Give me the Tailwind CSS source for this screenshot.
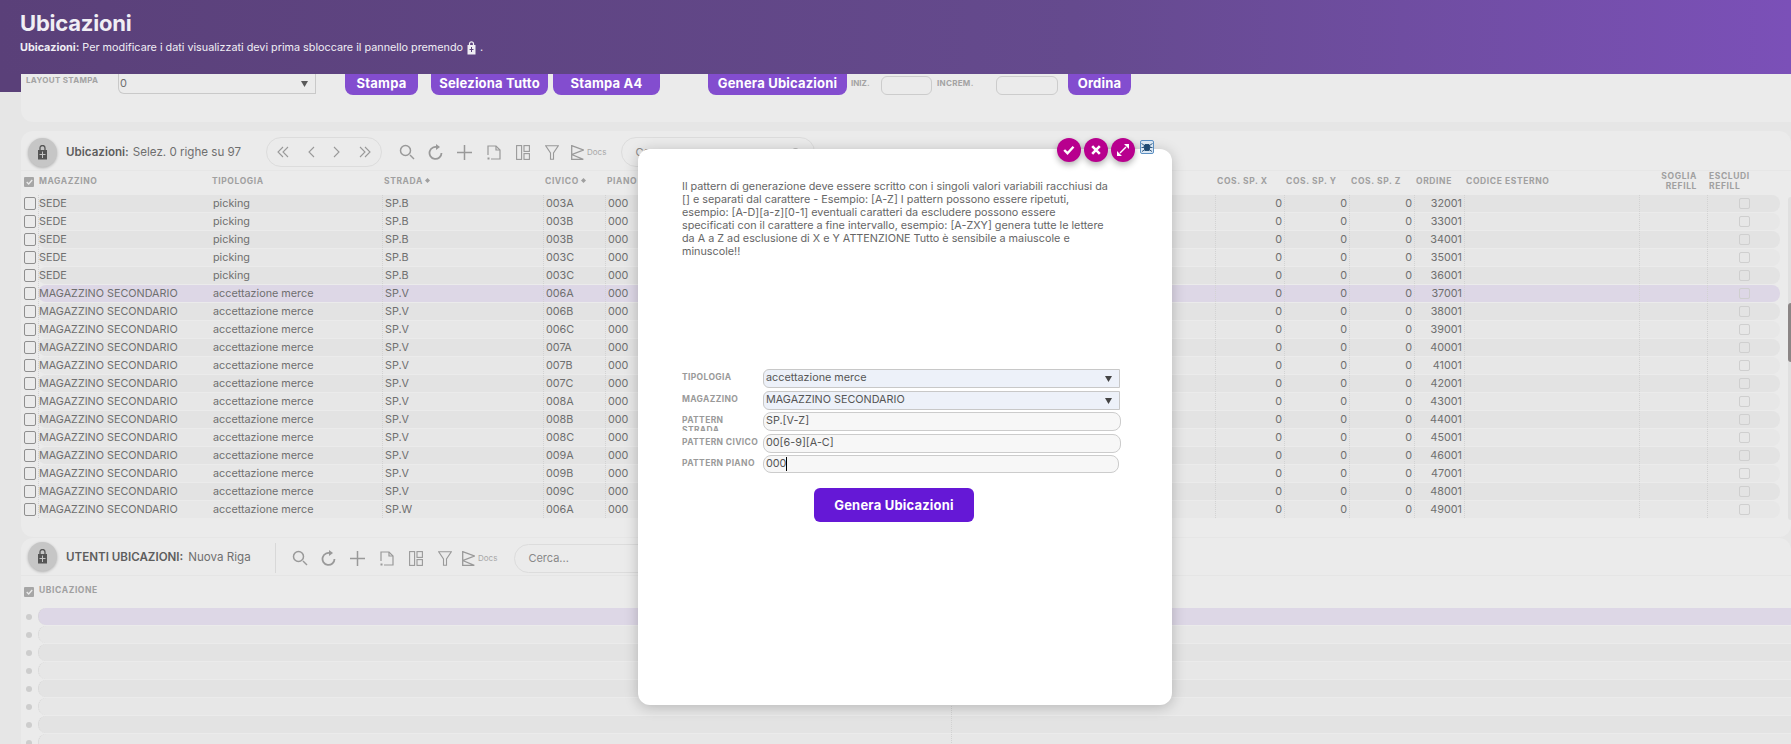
<!DOCTYPE html>
<html lang="it">
<head>
<meta charset="utf-8">
<script src="https://cdn.jsdelivr.net/npm/@tailwindcss/browser@4"></script>
</head>
<body class="relative w-[1791px] h-[744px] overflow-hidden bg-[#e6e6e6] font-['Inter',sans-serif] text-[#6f6f6f]">

<!-- Purple band -->
<div class="absolute inset-x-0 top-0 h-[92px] bg-[#5a4079]"></div>
<header class="absolute inset-x-0 top-0 z-10 h-[74px] bg-gradient-to-r from-[#5a4079] via-[#654a8e] via-60% to-[#7b50b8] pl-[20px] pt-[9px] text-[#f0eef4]">
  <h1 class="text-[22px] leading-[28px] font-bold tracking-[-0.2px]">Ubicazioni</h1>
  <p class="flex items-center mt-[4px] text-[10.8px] leading-[14px]"><b class="font-bold mr-[3px]">Ubicazioni:</b> Per modificare i dati visualizzati devi prima sbloccare il pannello premendo
    <svg class="mx-[4px]" width="9" height="14" viewBox="0 0 9 14"><path d="M2.5 4V2.8a2 2 0 0 1 4 0V4" fill="none" stroke="#f0eef4" stroke-width="1.2"/><rect x="0.5" y="4" width="8" height="9.5" fill="#f0eef4"/><path d="M4.5 6v5M2.5 8.5h4" stroke="#5a4079" stroke-width="1"/></svg> .</p>
</header>

<main class="relative pt-[74px]">
  <!-- Print panel -->
  <section class="ml-[21px] h-[48px] rounded-bl-xl bg-[#ebebeb] flex items-start pl-[5px] text-[#fff]">
    <span class="mt-[1px] w-[92px] text-[8px] leading-[10px] font-bold tracking-[0.3px] text-[#a3a3a3]">LAYOUT STAMPA</span>
    <div class="flex justify-between items-center w-[198px] h-[20px] border-x border-b border-[#c9c9c9] rounded-bl-md pl-px pr-[7px] text-[11px] text-[#6f6f6f]"><span>0</span><svg width="7" height="6"><path d="M0 0h7L3.500 6z" fill="#5a5a5a"/></svg></div>
    <div class="ml-[29px] w-[73px] h-[21px] rounded-b-lg bg-[#834dcf] text-center text-[13px] leading-[18px] font-bold tracking-[0.2px]">Stampa</div>
    <div class="ml-[13px] w-[117px] h-[21px] rounded-b-lg bg-[#834dcf] text-center text-[13px] leading-[18px] font-bold tracking-[0.2px]">Seleziona Tutto</div>
    <div class="ml-[5px] w-[107px] h-[21px] rounded-b-lg bg-[#834dcf] text-center text-[13px] leading-[18px] font-bold tracking-[0.2px]">Stampa A4</div>
    <div class="ml-[48px] w-[139px] h-[21px] rounded-b-lg bg-[#834dcf] text-center text-[13px] leading-[18px] font-bold tracking-[0.2px]">Genera Ubicazioni</div>
    <span class="ml-[4px] w-[30px] mt-[4px] text-[8px] leading-[10px] font-bold text-[#a3a3a3]">INIZ.</span>
    <div class="mt-[2px] w-[51px] h-[19px] rounded-md border border-[#cccccc]"></div>
    <span class="ml-[5px] w-[59px] mt-[4px] text-[8px] leading-[10px] font-bold tracking-[0.3px] text-[#a3a3a3]">INCREM.</span>
    <div class="mt-[2px] w-[62px] h-[19px] rounded-md border border-[#cccccc]"></div>
    <div class="ml-[10px] w-[63px] h-[21px] rounded-b-lg bg-[#834dcf] text-center text-[13px] leading-[18px] font-bold tracking-[0.2px]">Ordina</div>
  </section>

  <!-- Toolbar 1 -->
  <section class="ml-[21px] mt-[9px] h-[39px] rounded-t-xl bg-[#ebebeb] flex items-center pl-[7px] pt-[3px]">
    <div class="w-[29px] h-[29px] rounded-full bg-[#c6c6c6] shadow-[0_1px_3px_rgba(0,0,0,.25)] flex items-center justify-center">
      <svg width="11" height="15" viewBox="0 0 11 15"><path d="M3 5V3a2.500 2.500 0 0 1 5 0v2" fill="none" stroke="#555" stroke-width="1.300"/><rect x="1" y="5" width="9" height="9.500" fill="#555"/><path d="M5.500 6.500v6.500M2.500 9.500h6" stroke="#c6c6c6" stroke-width="1"/></svg>
    </div>
    <div class="ml-[9px] w-[176px] flex text-[11.6px] leading-[18px] whitespace-nowrap"><b class="font-semibold text-[#5d5d5d] mr-[4px]">Ubicazioni:</b> <span>Selez. 0 righe su 97</span></div>
    <div class="ml-[24px] w-[116px] h-[30px] rounded-full border border-[#dcdcdc] flex items-center justify-around px-[1px] text-[#999999]">
      <svg width="12" height="12" viewBox="0 0 12 12" fill="none" stroke="#999" stroke-width="1.100"><path d="M6 1 1 6l5 5M11 1 6 6l5 5"/></svg>
      <svg width="7" height="12" viewBox="0 0 7 12" fill="none" stroke="#999" stroke-width="1.100"><path d="M6 1 1 6l5 5"/></svg>
      <svg width="7" height="12" viewBox="0 0 7 12" fill="none" stroke="#999" stroke-width="1.100"><path d="m1 1 5 5-5 5"/></svg>
      <svg width="12" height="12" viewBox="0 0 12 12" fill="none" stroke="#999" stroke-width="1.100"><path d="m1 1 5 5-5 5M6 1l5 5-5 5"/></svg>
    </div>
    <div class="ml-[10px] flex items-center">
      <span class="w-[29px] flex justify-center"><svg width="16" height="16" viewBox="0 0 16 16" fill="none" stroke="#999" stroke-width="1.500"><circle cx="6.500" cy="6.500" r="5"/><path d="m11 11 4 4"/></svg></span>
      <span class="w-[29px] flex justify-center"><svg width="16" height="16" viewBox="0 0 16 16" fill="none" stroke="#999" stroke-width="1.800"><path d="M10 3.500a6 6 0 1 0 3.500 5.500"/><path d="M8 0v6l4-3z" fill="#999" stroke="none"/></svg></span>
      <span class="w-[29px] flex justify-center"><svg width="15" height="15" viewBox="0 0 15 15" stroke="#999" stroke-width="1.500"><path d="M7.500 0v15M0 7.500h15"/></svg></span>
      <span class="w-[29px] flex justify-center"><svg width="14" height="15" viewBox="0 0 14 15" fill="none" stroke="#999" stroke-width="1.200"><path d="M1 10V1h8l4 4v9H4"/><path d="M9 1v4h4"/><path d="M0.500 12.500h2v2h-2z" fill="#999" stroke="none"/></svg></span>
      <span class="w-[29px] flex justify-center"><svg width="14" height="15" viewBox="0 0 14 15" fill="none" stroke="#999" stroke-width="1.100"><rect x="0.600" y="0.600" width="5" height="13.800"/><rect x="8" y="0.600" width="5.400" height="5.800"/><rect x="8" y="8.600" width="5.400" height="5.800"/></svg></span>
      <span class="w-[29px] flex justify-center"><svg width="14" height="15" viewBox="0 0 14 15" fill="none" stroke="#999" stroke-width="1.100"><path d="M.7 .7h12.600L8.500 8v6.300h-3V8z"/></svg></span>
      <span class="w-[14px] ml-[5px] flex"><svg width="13" height="15" viewBox="0 0 13 15" fill="none" stroke="#999" stroke-width="1.300"><path d="M.7 .7 12.300 5 .7 9.500zM.7 9.500 12.300 14.300H.7z"/></svg></span>
      <span class="ml-[2px] text-[8px] text-[#a8a8a8]">Docs</span>
    </div>
    <div class="ml-[15px] w-[194px] h-[30px] rounded-full border border-[#dcdcdc] flex items-center justify-between pl-[13px] pr-[14px] text-[11px] text-[#888]"><span>Cerca...</span><span class="w-[9px] h-[9px] rounded-full border border-[#aaa]"></span></div>
  </section>

  <!-- Table 1 -->
  <section class="relative ml-[21px] mt-px h-[366px] rounded-b-xl bg-[#ebebeb]">
    <div class="h-[24px] flex items-center pb-[5px]">
      <span class="ml-[3px] w-[10px] h-[10px] bg-[#a6a6a6] rounded-[1px] mr-[4px] mt-[3px] flex items-center justify-center"><svg width="7" height="6" viewBox="0 0 7 6" fill="none" stroke="#ebebeb" stroke-width="1.300"><path d="m.7 3 2 2 3.500-4"/></svg></span>
      <div class="grid grid-cols-[172px_172px_161px_62px_610px_69px_65px_65px_50px_175px_68px_73px] text-[8.5px] leading-[10px] font-bold tracking-[0.6px] text-[#a0a0a0] items-center *:pl-[2px]">
        <span class="-ml-[1px]">MAGAZZINO</span><span>TIPOLOGIA</span><span class="flex items-center gap-[2px]">STRADA<svg width="5" height="5"><path d="M2.500 0 5 2.500 2.500 5 0 2.500z" fill="#a0a0a0"/></svg></span><span class="flex items-center gap-[2px]">CIVICO<svg width="5" height="5"><path d="M2.500 0 5 2.500 2.500 5 0 2.500z" fill="#a0a0a0"/></svg></span><span>PIANO</span><span>COS. SP. X</span><span>COS. SP. Y</span><span>COS. SP. Z</span><span>ORDINE</span><span>CODICE ESTERNO</span><span class="text-right pr-[10px] pl-0!">SOGLIA REFILL</span><span>ESCLUDI REFILL</span>
      </div>
    </div>

    <div class="flex flex-col gap-px pl-[17px] text-[10.8px] leading-[17px] [&>div]:h-[17px] [&>div]:grid [&>div]:grid-cols-[172px_172px_161px_62px_610px_69px_65px_65px_50px_175px_68px_73px] [&>div]:w-[1742px] [&>div]:rounded-lg [&>div]:relative [&>div>*]:px-[2px] [&>div>*]:border-l [&>div>*]:border-dotted [&>div>*]:border-[#d2d2d2]">
      <div class="bg-[#e3e3e3]"><span class="pl-0!">SEDE</span><span class="border-l-transparent!">picking</span><span>SP.B</span><span>003A</span><span>000</span><span class="text-right">0</span><span class="text-right">0</span><span class="text-right">0</span><span class="text-right">32001</span><span></span><span></span><span class="flex! items-center justify-center"><i class="w-[11px] h-[11px] rounded-[2px] border border-[#cfcfcf]"></i></span><i class="absolute -left-[14px] top-[2px] !border !border-solid w-[12px] h-[13px] rounded-[2px] !border-[#8f8f8f] !p-0"></i></div>
      <div class="bg-[#e7e7e7]"><span class="pl-0!">SEDE</span><span class="border-l-transparent!">picking</span><span>SP.B</span><span>003B</span><span>000</span><span class="text-right">0</span><span class="text-right">0</span><span class="text-right">0</span><span class="text-right">33001</span><span></span><span></span><span class="flex! items-center justify-center"><i class="w-[11px] h-[11px] rounded-[2px] border border-[#cfcfcf]"></i></span><i class="absolute -left-[14px] top-[2px] !border !border-solid w-[12px] h-[13px] rounded-[2px] !border-[#8f8f8f] !p-0"></i></div>
      <div class="bg-[#e3e3e3]"><span class="pl-0!">SEDE</span><span class="border-l-transparent!">picking</span><span>SP.B</span><span>003B</span><span>000</span><span class="text-right">0</span><span class="text-right">0</span><span class="text-right">0</span><span class="text-right">34001</span><span></span><span></span><span class="flex! items-center justify-center"><i class="w-[11px] h-[11px] rounded-[2px] border border-[#cfcfcf]"></i></span><i class="absolute -left-[14px] top-[2px] !border !border-solid w-[12px] h-[13px] rounded-[2px] !border-[#8f8f8f] !p-0"></i></div>
      <div class="bg-[#e7e7e7]"><span class="pl-0!">SEDE</span><span class="border-l-transparent!">picking</span><span>SP.B</span><span>003C</span><span>000</span><span class="text-right">0</span><span class="text-right">0</span><span class="text-right">0</span><span class="text-right">35001</span><span></span><span></span><span class="flex! items-center justify-center"><i class="w-[11px] h-[11px] rounded-[2px] border border-[#cfcfcf]"></i></span><i class="absolute -left-[14px] top-[2px] !border !border-solid w-[12px] h-[13px] rounded-[2px] !border-[#8f8f8f] !p-0"></i></div>
      <div class="bg-[#e3e3e3]"><span class="pl-0!">SEDE</span><span class="border-l-transparent!">picking</span><span>SP.B</span><span>003C</span><span>000</span><span class="text-right">0</span><span class="text-right">0</span><span class="text-right">0</span><span class="text-right">36001</span><span></span><span></span><span class="flex! items-center justify-center"><i class="w-[11px] h-[11px] rounded-[2px] border border-[#cfcfcf]"></i></span><i class="absolute -left-[14px] top-[2px] !border !border-solid w-[12px] h-[13px] rounded-[2px] !border-[#8f8f8f] !p-0"></i></div>
      <div class="bg-[#ddd7e6]"><span class="pl-0!">MAGAZZINO SECONDARIO</span><span class="border-l-transparent!">accettazione merce</span><span>SP.V</span><span>006A</span><span>000</span><span class="text-right">0</span><span class="text-right">0</span><span class="text-right">0</span><span class="text-right">37001</span><span></span><span></span><span class="flex! items-center justify-center"><i class="w-[11px] h-[11px] rounded-[2px] border border-[#cfcfcf]"></i></span><i class="absolute -left-[14px] top-[2px] !border !border-solid w-[12px] h-[13px] rounded-[2px] !border-[#8f8f8f] !p-0"></i></div>
      <div class="bg-[#e3e3e3]"><span class="pl-0!">MAGAZZINO SECONDARIO</span><span class="border-l-transparent!">accettazione merce</span><span>SP.V</span><span>006B</span><span>000</span><span class="text-right">0</span><span class="text-right">0</span><span class="text-right">0</span><span class="text-right">38001</span><span></span><span></span><span class="flex! items-center justify-center"><i class="w-[11px] h-[11px] rounded-[2px] border border-[#cfcfcf]"></i></span><i class="absolute -left-[14px] top-[2px] !border !border-solid w-[12px] h-[13px] rounded-[2px] !border-[#8f8f8f] !p-0"></i></div>
      <div class="bg-[#e7e7e7]"><span class="pl-0!">MAGAZZINO SECONDARIO</span><span class="border-l-transparent!">accettazione merce</span><span>SP.V</span><span>006C</span><span>000</span><span class="text-right">0</span><span class="text-right">0</span><span class="text-right">0</span><span class="text-right">39001</span><span></span><span></span><span class="flex! items-center justify-center"><i class="w-[11px] h-[11px] rounded-[2px] border border-[#cfcfcf]"></i></span><i class="absolute -left-[14px] top-[2px] !border !border-solid w-[12px] h-[13px] rounded-[2px] !border-[#8f8f8f] !p-0"></i></div>
      <div class="bg-[#e3e3e3]"><span class="pl-0!">MAGAZZINO SECONDARIO</span><span class="border-l-transparent!">accettazione merce</span><span>SP.V</span><span>007A</span><span>000</span><span class="text-right">0</span><span class="text-right">0</span><span class="text-right">0</span><span class="text-right">40001</span><span></span><span></span><span class="flex! items-center justify-center"><i class="w-[11px] h-[11px] rounded-[2px] border border-[#cfcfcf]"></i></span><i class="absolute -left-[14px] top-[2px] !border !border-solid w-[12px] h-[13px] rounded-[2px] !border-[#8f8f8f] !p-0"></i></div>
      <div class="bg-[#e7e7e7]"><span class="pl-0!">MAGAZZINO SECONDARIO</span><span class="border-l-transparent!">accettazione merce</span><span>SP.V</span><span>007B</span><span>000</span><span class="text-right">0</span><span class="text-right">0</span><span class="text-right">0</span><span class="text-right">41001</span><span></span><span></span><span class="flex! items-center justify-center"><i class="w-[11px] h-[11px] rounded-[2px] border border-[#cfcfcf]"></i></span><i class="absolute -left-[14px] top-[2px] !border !border-solid w-[12px] h-[13px] rounded-[2px] !border-[#8f8f8f] !p-0"></i></div>
      <div class="bg-[#e3e3e3]"><span class="pl-0!">MAGAZZINO SECONDARIO</span><span class="border-l-transparent!">accettazione merce</span><span>SP.V</span><span>007C</span><span>000</span><span class="text-right">0</span><span class="text-right">0</span><span class="text-right">0</span><span class="text-right">42001</span><span></span><span></span><span class="flex! items-center justify-center"><i class="w-[11px] h-[11px] rounded-[2px] border border-[#cfcfcf]"></i></span><i class="absolute -left-[14px] top-[2px] !border !border-solid w-[12px] h-[13px] rounded-[2px] !border-[#8f8f8f] !p-0"></i></div>
      <div class="bg-[#e7e7e7]"><span class="pl-0!">MAGAZZINO SECONDARIO</span><span class="border-l-transparent!">accettazione merce</span><span>SP.V</span><span>008A</span><span>000</span><span class="text-right">0</span><span class="text-right">0</span><span class="text-right">0</span><span class="text-right">43001</span><span></span><span></span><span class="flex! items-center justify-center"><i class="w-[11px] h-[11px] rounded-[2px] border border-[#cfcfcf]"></i></span><i class="absolute -left-[14px] top-[2px] !border !border-solid w-[12px] h-[13px] rounded-[2px] !border-[#8f8f8f] !p-0"></i></div>
      <div class="bg-[#e3e3e3]"><span class="pl-0!">MAGAZZINO SECONDARIO</span><span class="border-l-transparent!">accettazione merce</span><span>SP.V</span><span>008B</span><span>000</span><span class="text-right">0</span><span class="text-right">0</span><span class="text-right">0</span><span class="text-right">44001</span><span></span><span></span><span class="flex! items-center justify-center"><i class="w-[11px] h-[11px] rounded-[2px] border border-[#cfcfcf]"></i></span><i class="absolute -left-[14px] top-[2px] !border !border-solid w-[12px] h-[13px] rounded-[2px] !border-[#8f8f8f] !p-0"></i></div>
      <div class="bg-[#e7e7e7]"><span class="pl-0!">MAGAZZINO SECONDARIO</span><span class="border-l-transparent!">accettazione merce</span><span>SP.V</span><span>008C</span><span>000</span><span class="text-right">0</span><span class="text-right">0</span><span class="text-right">0</span><span class="text-right">45001</span><span></span><span></span><span class="flex! items-center justify-center"><i class="w-[11px] h-[11px] rounded-[2px] border border-[#cfcfcf]"></i></span><i class="absolute -left-[14px] top-[2px] !border !border-solid w-[12px] h-[13px] rounded-[2px] !border-[#8f8f8f] !p-0"></i></div>
      <div class="bg-[#e3e3e3]"><span class="pl-0!">MAGAZZINO SECONDARIO</span><span class="border-l-transparent!">accettazione merce</span><span>SP.V</span><span>009A</span><span>000</span><span class="text-right">0</span><span class="text-right">0</span><span class="text-right">0</span><span class="text-right">46001</span><span></span><span></span><span class="flex! items-center justify-center"><i class="w-[11px] h-[11px] rounded-[2px] border border-[#cfcfcf]"></i></span><i class="absolute -left-[14px] top-[2px] !border !border-solid w-[12px] h-[13px] rounded-[2px] !border-[#8f8f8f] !p-0"></i></div>
      <div class="bg-[#e7e7e7]"><span class="pl-0!">MAGAZZINO SECONDARIO</span><span class="border-l-transparent!">accettazione merce</span><span>SP.V</span><span>009B</span><span>000</span><span class="text-right">0</span><span class="text-right">0</span><span class="text-right">0</span><span class="text-right">47001</span><span></span><span></span><span class="flex! items-center justify-center"><i class="w-[11px] h-[11px] rounded-[2px] border border-[#cfcfcf]"></i></span><i class="absolute -left-[14px] top-[2px] !border !border-solid w-[12px] h-[13px] rounded-[2px] !border-[#8f8f8f] !p-0"></i></div>
      <div class="bg-[#e3e3e3]"><span class="pl-0!">MAGAZZINO SECONDARIO</span><span class="border-l-transparent!">accettazione merce</span><span>SP.V</span><span>009C</span><span>000</span><span class="text-right">0</span><span class="text-right">0</span><span class="text-right">0</span><span class="text-right">48001</span><span></span><span></span><span class="flex! items-center justify-center"><i class="w-[11px] h-[11px] rounded-[2px] border border-[#cfcfcf]"></i></span><i class="absolute -left-[14px] top-[2px] !border !border-solid w-[12px] h-[13px] rounded-[2px] !border-[#8f8f8f] !p-0"></i></div>
      <div class="bg-[#e7e7e7]"><span class="pl-0!">MAGAZZINO SECONDARIO</span><span class="border-l-transparent!">accettazione merce</span><span>SP.W</span><span>006A</span><span>000</span><span class="text-right">0</span><span class="text-right">0</span><span class="text-right">0</span><span class="text-right">49001</span><span></span><span></span><span class="flex! items-center justify-center"><i class="w-[11px] h-[11px] rounded-[2px] border border-[#cfcfcf]"></i></span><i class="absolute -left-[14px] top-[2px] !border !border-solid w-[12px] h-[13px] rounded-[2px] !border-[#8f8f8f] !p-0"></i></div>
    </div>
    <!-- scrollbar -->
    <div class="absolute right-0 top-[26px] w-[3px] h-[323px] rounded-l bg-[#e0e0e0]"><div class="mt-[106px] h-[59px] rounded-l bg-[#8b8585]"></div></div>
  </section>

  <!-- Toolbar 2 -->
  <section class="ml-[21px] mt-px h-[38px] rounded-t-xl bg-[#ebebeb] flex items-center pl-[7px] border-b border-[#e5e5e5]">
    <div class="w-[29px] h-[29px] rounded-full bg-[#c6c6c6] shadow-[0_1px_3px_rgba(0,0,0,.25)] flex items-center justify-center">
      <svg width="11" height="15" viewBox="0 0 11 15"><path d="M3 5V3a2.500 2.500 0 0 1 5 0v2" fill="none" stroke="#555" stroke-width="1.300"/><rect x="1" y="5" width="9" height="9.500" fill="#555"/><path d="M5.500 6.500v6.500M2.500 9.500h6" stroke="#c6c6c6" stroke-width="1"/></svg>
    </div>
    <div class="ml-[9px] mt-px w-[209px] flex text-[11.6px] leading-[18px] whitespace-nowrap"><b class="font-semibold text-[#5d5d5d] mr-[5px]">UTENTI UBICAZIONI:</b> <span>Nuova Riga</span></div>
    <div class="w-px h-[30px] mt-[3px] bg-[#d8d8d8]"></div>
    <div class="ml-[9px] mt-[3px] flex items-center">
      <span class="w-[29px] flex justify-center"><svg width="16" height="16" viewBox="0 0 16 16" fill="none" stroke="#999" stroke-width="1.500"><circle cx="6.500" cy="6.500" r="5"/><path d="m11 11 4 4"/></svg></span>
      <span class="w-[29px] flex justify-center"><svg width="16" height="16" viewBox="0 0 16 16" fill="none" stroke="#999" stroke-width="1.800"><path d="M10 3.500a6 6 0 1 0 3.500 5.500"/><path d="M8 0v6l4-3z" fill="#999" stroke="none"/></svg></span>
      <span class="w-[29px] flex justify-center"><svg width="15" height="15" viewBox="0 0 15 15" stroke="#999" stroke-width="1.500"><path d="M7.500 0v15M0 7.500h15"/></svg></span>
      <span class="w-[29px] flex justify-center"><svg width="14" height="15" viewBox="0 0 14 15" fill="none" stroke="#999" stroke-width="1.200"><path d="M1 10V1h8l4 4v9H4"/><path d="M9 1v4h4"/><path d="M0.500 12.500h2v2h-2z" fill="#999" stroke="none"/></svg></span>
      <span class="w-[29px] flex justify-center"><svg width="14" height="15" viewBox="0 0 14 15" fill="none" stroke="#999" stroke-width="1.100"><rect x="0.600" y="0.600" width="5" height="13.800"/><rect x="8" y="0.600" width="5.400" height="5.800"/><rect x="8" y="8.600" width="5.400" height="5.800"/></svg></span>
      <span class="w-[29px] flex justify-center"><svg width="14" height="15" viewBox="0 0 14 15" fill="none" stroke="#999" stroke-width="1.100"><path d="M.7 .7h12.600L8.500 8v6.300h-3V8z"/></svg></span>
      <span class="w-[14px] ml-[3px] flex"><svg width="13" height="15" viewBox="0 0 13 15" fill="none" stroke="#999" stroke-width="1.300"><path d="M.7 .7 12.300 5 .7 9.500zM.7 9.500 12.300 14.300H.7z"/></svg></span>
      <span class="ml-[2px] text-[8px] text-[#a8a8a8]">Docs</span>
    </div>
    <div class="ml-[17px] mt-[3px] w-[300px] h-[29px] rounded-full border border-[#dcdcdc] flex items-center pl-[13px] text-[11px] text-[#888]">Cerca...</div>
  </section>

  <!-- Table 2 -->
  <section class="ml-[21px] h-[170px] bg-[#ebebeb]">
    <div class="h-[32px] flex items-center pb-[5px]">
      <span class="ml-[3px] w-[10px] h-[10px] bg-[#a6a6a6] rounded-[1px] mr-[5px] mt-[4px] flex items-center justify-center"><svg width="7" height="6" viewBox="0 0 7 6" fill="none" stroke="#ebebeb" stroke-width="1.300"><path d="m.7 3 2 2 3.500-4"/></svg></span>
      <span class="text-[8.500px] leading-[10px] font-bold tracking-[0.6px] text-[#a0a0a0]">UBICAZIONE</span>
    </div>
    <div class="flex flex-col gap-px [&>div]:flex [&>div]:items-center [&>div]:h-[17px]">
      <div><i class="ml-[5px] mr-[6px] w-[6px] h-[6px] rounded-full bg-[#cdcdcd]"></i><span class="grid grid-cols-[912px_1fr] flex-1 h-full rounded-l-lg bg-[#ddd7e6] border-l border-dotted border-[#d2d2d2]"><i></i><i class="border-l border-dotted border-[#d2d2d2]"></i></span></div>
      <div><i class="ml-[5px] mr-[6px] w-[6px] h-[6px] rounded-full bg-[#cdcdcd]"></i><span class="grid grid-cols-[912px_1fr] flex-1 h-full rounded-l-lg bg-[#e7e7e7] border-l border-dotted border-[#d2d2d2]"><i></i><i class="border-l border-dotted border-[#d2d2d2]"></i></span></div>
      <div><i class="ml-[5px] mr-[6px] w-[6px] h-[6px] rounded-full bg-[#cdcdcd]"></i><span class="grid grid-cols-[912px_1fr] flex-1 h-full rounded-l-lg bg-[#e3e3e3] border-l border-dotted border-[#d2d2d2]"><i></i><i class="border-l border-dotted border-[#d2d2d2]"></i></span></div>
      <div><i class="ml-[5px] mr-[6px] w-[6px] h-[6px] rounded-full bg-[#cdcdcd]"></i><span class="grid grid-cols-[912px_1fr] flex-1 h-full rounded-l-lg bg-[#e7e7e7] border-l border-dotted border-[#d2d2d2]"><i></i><i class="border-l border-dotted border-[#d2d2d2]"></i></span></div>
      <div><i class="ml-[5px] mr-[6px] w-[6px] h-[6px] rounded-full bg-[#cdcdcd]"></i><span class="grid grid-cols-[912px_1fr] flex-1 h-full rounded-l-lg bg-[#e3e3e3] border-l border-dotted border-[#d2d2d2]"><i></i><i class="border-l border-dotted border-[#d2d2d2]"></i></span></div>
      <div><i class="ml-[5px] mr-[6px] w-[6px] h-[6px] rounded-full bg-[#cdcdcd]"></i><span class="grid grid-cols-[912px_1fr] flex-1 h-full rounded-l-lg bg-[#e7e7e7] border-l border-dotted border-[#d2d2d2]"><i></i><i class="border-l border-dotted border-[#d2d2d2]"></i></span></div>
      <div><i class="ml-[5px] mr-[6px] w-[6px] h-[6px] rounded-full bg-[#cdcdcd]"></i><span class="grid grid-cols-[912px_1fr] flex-1 h-full rounded-l-lg bg-[#e3e3e3] border-l border-dotted border-[#d2d2d2]"><i></i><i class="border-l border-dotted border-[#d2d2d2]"></i></span></div>
      <div><i class="ml-[5px] mr-[6px] w-[6px] h-[6px] rounded-full bg-[#cdcdcd]"></i><span class="grid grid-cols-[912px_1fr] flex-1 h-full rounded-l-lg bg-[#e7e7e7] border-l border-dotted border-[#d2d2d2]"><i></i><i class="border-l border-dotted border-[#d2d2d2]"></i></span></div>
    </div>
  </section>
</main>

<!-- Modal -->
<div class="absolute z-20 left-[638px] top-[149px] w-[534px] h-[556px] rounded-xl bg-white shadow-[0_2px_14px_rgba(0,0,0,.22)] pl-[44px] pt-[31px] text-[#666]">
  <div class="absolute right-[37px] -top-[11px] flex gap-[3px]">
    <span class="w-[24px] h-[24px] rounded-full bg-[#b8008e] shadow-[0_3px_6px_rgba(0,0,0,.3)] flex items-center justify-center"><svg width="12" height="10" viewBox="0 0 12 10" fill="none" stroke="#fff" stroke-width="2.400"><path d="m1.200 5 3.300 3.200 6-6.500"/></svg></span>
    <span class="w-[24px] h-[24px] rounded-full bg-[#b8008e] shadow-[0_3px_6px_rgba(0,0,0,.3)] flex items-center justify-center"><svg width="10" height="10" viewBox="0 0 10 10" fill="none" stroke="#fff" stroke-width="2.600"><path d="m1.200 1.200 7.600 7.600M8.800 1.200 1.200 8.800"/></svg></span>
    <span class="w-[24px] h-[24px] rounded-full bg-[#b8008e] shadow-[0_3px_6px_rgba(0,0,0,.3)] flex items-center justify-center"><svg width="12" height="12" viewBox="0 0 12 12"><path d="M12 0v5L7 0zM0 12V7l5 5z" fill="#fff"/><path d="m9 3-6 6" stroke="#fff" stroke-width="1.500"/></svg></span>
  </div>
  <svg class="absolute right-[18px] -top-[9px]" width="14" height="14" viewBox="0 0 14 14"><rect x=".5" y=".5" width="13" height="13" rx="1.500" fill="#dbe7f3" stroke="#5b8fc2"/><path d="M5 4.500h4l1 2-1 4H5l-1-4zM1.500 3.500l3 2M12.500 3.500l-3 2M1.500 7.500h3M12.500 7.500h-3M2 11.500l3-2M12 11.500l-3-2" fill="#1f4a73" stroke="#1f4a73" stroke-width=".9"/></svg>

  <p class="w-[428px] h-[189px] text-[10.8px] leading-[13px]">Il pattern di generazione deve essere scritto con i singoli valori variabili racchiusi da [] e separati dal carattere - Esempio: [A-Z] I pattern possono essere ripetuti, esempio: [A-D][a-z][0-1] eventuali caratteri da escludere possono essere specificati con il carattere a fine intervallo, esempio: [A-ZXY] genera tutte le lettere da A a Z ad esclusione di X e Y ATTENZIONE Tutto è sensibile a maiuscole e minuscole!!</p>

  <form class="w-[440px]">
    <div class="flex h-[19px] mb-[3px]"><span class="w-[81px] pt-[3px] text-[8.500px] leading-[10px] font-bold tracking-[0.35px] text-[#9a9a9a]">TIPOLOGIA</span><div class="w-[357px] flex items-center justify-between border border-[#c8c8c8] rounded-l-md bg-[#edf1f9] pl-[2px] pr-[7px] text-[10.8px] text-[#555]"><span>accettazione merce</span><svg width="7" height="6"><path d="M0 0h7L3.500 6z" fill="#444"/></svg></div></div>
    <div class="flex h-[19px] mb-[2px]"><span class="w-[81px] pt-[3px] text-[8.500px] leading-[10px] font-bold tracking-[0.35px] text-[#9a9a9a]">MAGAZZINO</span><div class="w-[357px] flex items-center justify-between border border-[#c8c8c8] rounded-l-md bg-[#edf1f9] pl-[2px] pr-[7px] text-[10.8px] text-[#555]"><span>MAGAZZINO SECONDARIO</span><svg width="7" height="6"><path d="M0 0h7L3.500 6z" fill="#444"/></svg></div></div>
    <div class="flex h-[19px] mb-[3px] overflow-hidden"><span class="w-[81px] pr-[20px] pt-[3px] text-[8.500px] leading-[10px] font-bold tracking-[0.35px] text-[#9a9a9a]">PATTERN STRADA</span><div class="w-[358px] flex items-center border border-[#cccccc] rounded-lg bg-[#f7f7f7] pl-[2px] text-[10.8px] text-[#555]">SP.[V-Z]</div></div>
    <div class="flex h-[19px] mb-[2px]"><span class="w-[81px] pt-[3px] text-[8.500px] leading-[10px] font-bold tracking-[0.35px] text-[#9a9a9a] whitespace-nowrap">PATTERN CIVICO</span><div class="w-[358px] flex items-center border border-[#cccccc] rounded-lg bg-[#f7f7f7] pl-[2px] text-[10.8px] text-[#555]">00[6-9][A-C]</div></div>
    <div class="flex h-[18px]"><span class="w-[81px] pt-[3px] text-[8.500px] leading-[10px] font-bold tracking-[0.35px] text-[#9a9a9a] whitespace-nowrap">PATTERN PIANO</span><div class="w-[356px] flex items-center border border-[#cccccc] rounded-lg bg-[#f7f7f7] pl-[2px] text-[10.8px] text-[#555]">000<i class="w-px h-[14px] bg-black"></i></div></div>
    <div class="ml-[132px] mt-[15px] w-[160px] h-[34px] rounded-md bg-[#6518d6] text-center text-[13px] leading-[34px] font-bold tracking-[0.2px] text-white">Genera Ubicazioni</div>
  </form>
</div>
</body>
</html>
